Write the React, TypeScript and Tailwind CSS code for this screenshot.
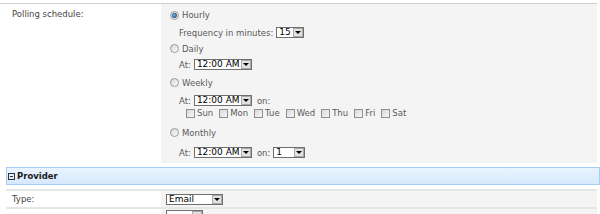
import React from 'react';

const Radio = ({ checked }: { checked?: boolean }) => (
  <svg width="9" height="9" viewBox="0 0 9 9" className="shrink-0">
    <defs>
      <linearGradient id="rg" x1="0" y1="0" x2="1" y2="1">
        <stop offset="0" stopColor="#d4d4d4" />
        <stop offset="1" stopColor="#ffffff" />
      </linearGradient>
      <radialGradient id="rd" cx="0.4" cy="0.4" r="0.6">
        <stop offset="0" stopColor="#7fc2ff" />
        <stop offset="1" stopColor="#1c5aa8" />
      </radialGradient>
    </defs>
    <circle cx="4.5" cy="4.5" r="4" fill="url(#rg)" stroke="#9a9a9a" strokeWidth="1" />
    {checked && <circle cx="4.5" cy="4.5" r="2.2" fill="url(#rd)" stroke="#1d3f6b" strokeWidth="0.6" />}
  </svg>
);

const Check = () => (
  <span className="h-[9px] w-[9px] shrink-0 border border-[#8f8f8f] bg-gradient-to-br from-[#d9d9d9] to-[#f7f7f7]" />
);

const Select = ({ value, width }: { value: string; width: string }) => (
  <div className={`flex h-[11px] shrink-0 items-stretch border border-[#6f6f6f] bg-white ${width}`}>
    <span className="flex-1 overflow-hidden whitespace-nowrap pl-[2px] text-[9px] leading-[9px] text-black">{value}</span>
    <span className="flex w-[10px] items-center justify-center border border-[#a9a9a9] bg-[#e2e2e2]">
      <span className="h-0 w-0 border-x-[3px] border-t-[3px] border-x-transparent border-t-black" />
    </span>
  </div>
);

const days = ['Sun', 'Mon', 'Tue', 'Wed', 'Thu', 'Fri', 'Sat'];

export default function App() {
  return (
    <div className="h-[214px] w-[600px] overflow-hidden bg-white pt-[3px] font-['DejaVu_Sans',sans-serif] text-[8.5px] leading-[12px] text-[#5a5a5a]">
      <div className="w-[597px] border-t border-[#cfcfcf]">
        <div className="grid grid-cols-[161px_436px]">
          <div className="pl-[12px] pt-[4px] text-[#464646]">Polling schedule:</div>
          <div className="flex flex-col bg-[#f4f4f4] pl-[9px] pb-[4px]">
            <div className="flex h-[22px] items-center gap-[3px]">
              <Radio checked />
              <span>Hourly</span>
            </div>
            <div className="flex h-[13px] items-center gap-[3px] pl-[9px]">
              <span>Frequency in minutes:</span>
              <Select value="15" width="w-[28px]" />
            </div>
            <div className="flex h-[19px] items-center gap-[3px]">
              <Radio />
              <span>Daily</span>
            </div>
            <div className="flex h-[13px] items-center gap-[3px] pl-[9px]">
              <span>At:</span>
              <Select value="12:00 AM" width="w-[58px]" />
            </div>
            <div className="flex h-[23px] items-center gap-[3px]">
              <Radio />
              <span>Weekly</span>
            </div>
            <div className="flex h-[13px] items-center gap-[3px] pl-[9px]">
              <span>At:</span>
              <Select value="12:00 AM" width="w-[58px]" />
              <span className="pl-[2px]">on:</span>
            </div>
            <div className="flex h-[12px] items-center gap-[6px] pl-[16px]">
              {days.map((d) => (
                <span key={d} className="flex items-center gap-[2px]">
                  <Check />
                  <span>{d}</span>
                </span>
              ))}
            </div>
            <div className="flex h-[27px] items-center gap-[3px]">
              <Radio />
              <span>Monthly</span>
            </div>
            <div className="flex h-[13px] items-center gap-[3px] pl-[9px]">
              <span>At:</span>
              <Select value="12:00 AM" width="w-[58px]" />
              <span className="pl-[2px]">on:</span>
              <Select value="1" width="w-[32px]" />
            </div>
          </div>
        </div>
      </div>

      <div className="ml-[6px] mt-[4px] flex h-[18px] items-center gap-[2px] border border-[#a8cdf4] bg-gradient-to-b from-[#e9f4ff] to-[#d7e8fd] pl-[1px]">
        <span className="relative h-[7px] w-[7px] border border-[#333]">
          <span className="absolute left-[1px] right-[1px] top-[2px] h-px bg-[#333]" />
        </span>
        <span className="font-bold text-[#1a1a1a]">Provider</span>
      </div>

      <div className="ml-[6px] mt-[4px] w-[591px] border-t-2 border-[#e6e6e6]">
        <div className="grid grid-cols-[155px_436px]">
          <div className="flex items-center pl-[6px] text-[#464646]">Type:</div>
          <div className="flex h-[16px] items-center bg-[#f4f4f4] pl-[5px]">
            <Select value="Email" width="w-[57px]" />
          </div>
        </div>
      </div>
      <div className="ml-[6px] w-[591px] border-t-2 border-[#e6e6e6]">
        <div className="grid grid-cols-[155px_436px]">
          <div />
          <div className="flex h-[16px] items-start bg-[#f4f4f4] pl-[5px] pt-[1px]">
            <Select value="" width="w-[37px]" />
          </div>
        </div>
      </div>
    </div>
  );
}
